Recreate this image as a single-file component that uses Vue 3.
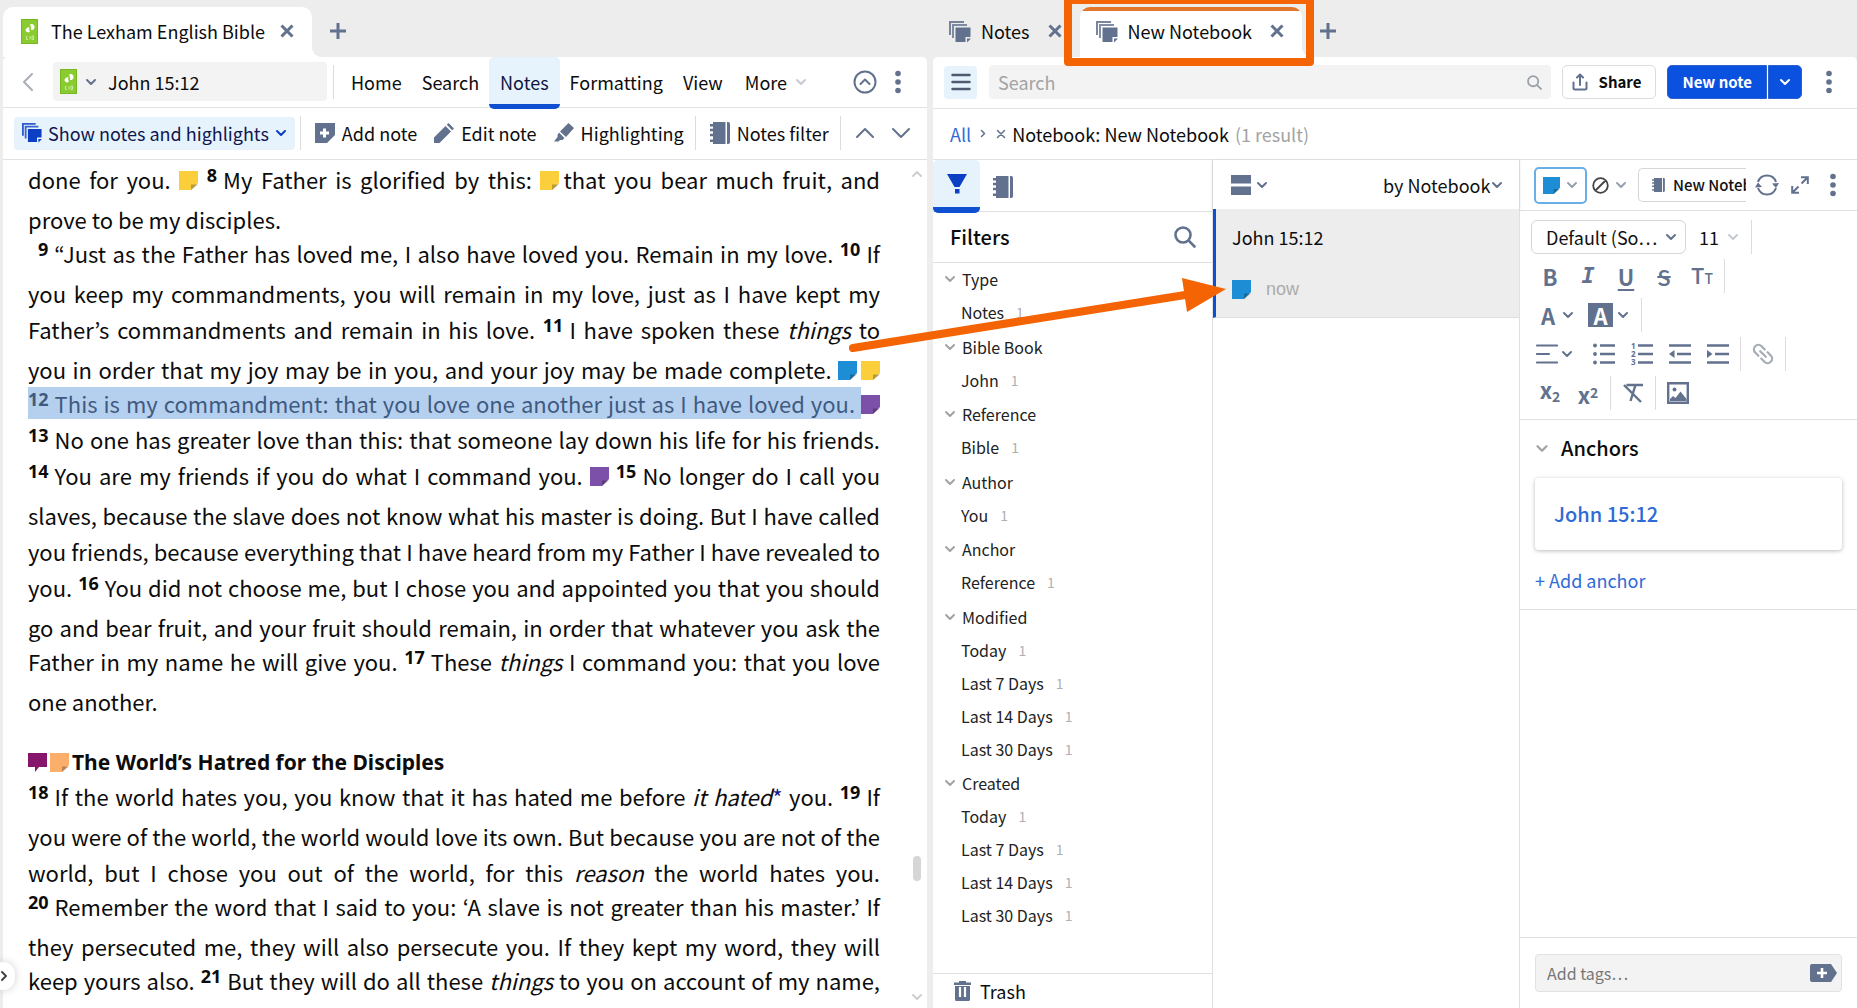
<script setup>
import { h, ref } from 'vue'

const stroke = (w, d) => `<path d="${d}" fill="none" stroke="currentColor" stroke-width="${w}" stroke-linecap="round" stroke-linejoin="round"/>`
const glyphs = {
  down: ['0 0 12 8', stroke(2, 'M2 2l4 4 4-4')],
  up: ['0 0 20 12', stroke(2, 'M2 10l8-8 8 8')],
  downWide: ['0 0 20 12', stroke(2, 'M2 2l8 8 8-8')],
  upSmall: ['0 0 12 8', stroke(2, 'M2 6l4-4 4 4')],
  back: ['0 0 12 20', stroke(2, 'M10 2l-8 8 8 8')],
  right: ['0 0 8 12', stroke(2, 'M2 2l4 4-4 4')],
  close: ['0 0 14 14', '<path d="M1.500 1.500l11 11M12.500 1.500l-11 11" fill="none" stroke="currentColor" stroke-width="3"/>'],
  closeThin: ['0 0 10 10', stroke(1.5, 'M1.500 1.500l7 7M8.500 1.500l-7 7')],
  plus: ['0 0 18 18', '<path d="M9 1v16M1 9h16" fill="none" stroke="currentColor" stroke-width="3"/>'],
  dots: ['0 0 6 24', '<g fill="currentColor"><circle cx="3" cy="3.500" r="2.800"/><circle cx="3" cy="12" r="2.800"/><circle cx="3" cy="20.500" r="2.800"/></g>'],
  book: ['0 0 17 25', '<path d="M0 0h17v25H0z" fill="#8acb2f"/><path d="M.5.500h16v24H.5z" fill="none" stroke="#75b81f"/><path d="M9 5.500a3 3 0 1 1 1 5.500c.5-2-.2-3.500-1-5.500zM8.500 8c-2.500.5-4.500 2-3.800 3.800 1 1.800 3.500 2.200 4.300.5-1-1-.9-2.500-.5-4.300z" fill="#fff"/><path d="M5.500 17v3.500h1.500M9 17v3.500M11 17v3.500h1.500v-3.500z" fill="none" stroke="#c8ea9b"/>'],
  stack: ['0 0 22 22', '<g fill="currentColor"><path d="M0 0h15v2H2v12H0z" opacity=".85"/><path d="M3 3h15v2H5v12H3z" opacity=".8"/><path d="M6.500 6.500h15V16h-5v5h-10z"/><path d="M18 21.500v-4h4z"/></g>'],
  circleUp: ['0 0 24 24', stroke(2, 'M12 1.500a10.500 10.500 0 1 1 0 21 10.500 10.500 0 0 1 0-21zM7.500 14l4.500-4.500 4.500 4.500')],
  addNote: ['0 0 20 20', '<path d="M0 0h20v12l-8 8H0z" fill="currentColor"/><path d="M9.500 5.500v9M5 10h9" stroke="#fff" stroke-width="3"/>'],
  pencil: ['0 0 20 20', '<path d="M0 20v-5.500L11.500 3 17 8.500 5.500 20zM12.800 1.800L14.500 0 20 5.500l-1.800 1.700z" fill="currentColor"/>'],
  marker: ['0 0 20 20', '<path d="M6 8.500L14.500 0 20 5l-8 9zM5 9.500l5.500 5.500-2 2H6l-1.500 1.500H0l3.500-4.500V12z" fill="currentColor"/>'],
  notebook: ['0 0 20 22', '<g fill="currentColor"><path d="M3 0h12.500v22H3v-2H0v-2.500h3v-3.200H0v-2.500h3V9.200H0V6.700h3V4.500H0V2h3z"/><path d="M17 0h1.200A1.800 1.800 0 0 1 20 1.800v18.400a1.800 1.800 0 0 1-1.800 1.800H17z"/></g>'],
  menu: ['0 0 20 18', stroke(2.5, 'M1.500 2h17M1.500 9h17M1.500 16h17')],
  search: ['0 0 22 22', stroke(2.6, 'M9 1.500a7.500 7.500 0 1 1 0 15 7.500 7.500 0 0 1 0-15zM14.700 14.700l5.800 5.800')],
  share: ['0 0 16 18', stroke(2, 'M8 12V2M5 4.500L8 1.500l3 3M1.500 9.500V15a1.500 1.500 0 0 0 1.500 1.500h10a1.500 1.500 0 0 0 1.500-1.500V9.500')],
  funnel: ['0 0 20 20', '<path d="M0 0h20l-7.500 13h-5zM8 15h4.500v4.500H8z" fill="currentColor"/>'],
  rows: ['0 0 20 20', '<path d="M0 0h20v8.500H0zM0 11.500h20V20H0z" fill="currentColor"/>'],
  note: ['0 0 19 19', '<path d="M0 0h19v12l-7 7H0z" fill="currentColor"/><path d="M12 19v-5.500h7z" fill="#000" opacity=".25"/>'],
  bubble: ['0 0 19 19', '<path d="M0 0h19v14h-8l-4 5v-5H0z" fill="currentColor"/>'],
  none: ['0 0 17 17', '<path d="M8.500 1.200a7.300 7.300 0 1 1 0 14.600 7.300 7.300 0 0 1 0-14.600zM3.500 13.500l10-10" fill="none" stroke="#444" stroke-width="1.800"/>'],
  sync: ['0 0 24 22', '<path d="M3 8a9.500 9.500 0 0 1 18 0M3 14a9.500 9.500 0 0 0 18 0" fill="none" stroke="currentColor" stroke-width="2"/><path d="M0 13.500l3-5 4 4.500zM24 9l-3 5-4-4.500z" fill="currentColor"/>'],
  expand: ['0 0 18 18', '<path d="M10.500 7.500L16 2M10 1.200h6.800V8M7.500 10.500L2 16M1.200 10v6.800H8" fill="none" stroke="currentColor" stroke-width="2"/>'],
  align: ['0 0 22 22', stroke(2.2, 'M1 2.500h20M1 11h12M1 19.500h20')],
  bullets: ['0 0 22 22', '<path d="M7 2.500h15M7 11h15M7 19.500h15" stroke="currentColor" stroke-width="2.400"/><g fill="currentColor"><circle cx="2" cy="2.500" r="1.900"/><circle cx="2" cy="11" r="1.900"/><circle cx="2" cy="19.500" r="1.900"/></g>'],
  numbers: ['0 0 22 22', '<path d="M7 2.500h15M7 11h15M7 19.500h15" stroke="currentColor" stroke-width="2.400"/><g fill="currentColor" font-family="Noto Sans, sans-serif" font-weight="700" font-size="8"><text x="0" y="6">1</text><text x="0" y="14">2</text><text x="0" y="22">3</text></g>'],
  outdent: ['0 0 22 22', '<path d="M0 2.500h22M8 11h14M0 19.500h22" stroke="currentColor" stroke-width="2.400"/><path d="M0 11l5.500-4v8z" fill="currentColor"/>'],
  indent: ['0 0 22 22', '<path d="M0 2.500h22M8 11h14M0 19.500h22" stroke="currentColor" stroke-width="2.400"/><path d="M5.500 11L0 7v8z" fill="currentColor"/>'],
  link: ['0 0 24 24', '<g transform="rotate(45 12 12)">' + stroke(2.2, 'M10 7.500H5.500a4.500 4.500 0 0 0 0 9H10M14 7.500h4.500a4.500 4.500 0 0 1 0 9H14M8 12h8') + '</g>'],
  clear: ['0 0 20 20', '<path d="M3.500 2H20M12.500 2l-5 16M1 2l17 17" fill="none" stroke="currentColor" stroke-width="2.400"/>'],
  image: ['0 0 22 22', '<path d="M1.200 1.200h19.600v19.600H1.200z" fill="none" stroke="currentColor" stroke-width="2.400"/><circle cx="7.500" cy="7.500" r="2" fill="currentColor"/><path d="M3 19v-2l3-3 2.500 2 5-6.500L19.500 17v2z" fill="currentColor"/>'],
  trash: ['0 0 17 20', '<path d="M0 1.500h5V0h7v1.500h5V4H0zM1 5h15v13.500a1.500 1.500 0 0 1-1.500 1.500h-12A1.500 1.500 0 0 1 1 18.500z" fill="currentColor"/><path d="M6 6v10M11 6v10" stroke="#fff" stroke-width="2.200"/>'],
  tag: ['0 0 27 18', '<path d="M2 0h19l6 9-6 9H2a2 2 0 0 1-2-2V2a2 2 0 0 1 2-2z" fill="currentColor"/><path d="M12 4v10M7 9h10" stroke="#fff" stroke-width="2.600"/>'],
}
const Ico = (p) => {
  const [box, inner] = glyphs[p.n]
  const [, , w, hh] = box.split(' ').map(Number)
  const width = p.w || w
  return h('svg', { class: 'ico', viewBox: box, width, height: Math.round((hh * width) / w), 'aria-hidden': 'true', innerHTML: inner })
}
Ico.props = ['n', 'w']

const menu = ['Home', 'Search', 'Notes', 'Formatting', 'View']
const days = ['Today', 'Last 7 Days', 'Last 14 Days', 'Last 30 Days']
const groups = [
  { name: 'Type', items: ['Notes'] },
  { name: 'Bible Book', items: ['John'] },
  { name: 'Reference', items: ['Bible'] },
  { name: 'Author', items: ['You'] },
  { name: 'Anchor', items: ['Reference'] },
  { name: 'Modified', items: days },
  { name: 'Created', items: days },
]
const reference = ref('John 15:12')
const query = ref('')
const tags = ref('')
</script>

<template>
  <div class="app">
    <section class="pane">
      <header class="tabs">
        <div class="tab active">
          <Ico n="book" /><span>The Lexham English Bible</span>
          <button class="x" aria-label="Close tab"><Ico n="close" /></button>
        </div>
        <button class="add" aria-label="New tab"><Ico n="plus" /></button>
      </header>
      <div class="body">
        <nav class="bar main">
          <button class="back" aria-label="Back"><Ico n="back" /></button>
          <div class="address">
            <Ico n="book" /><Ico n="down" class="slate" />
            <input v-model="reference" aria-label="Reference" />
          </div>
          <i class="sep"></i>
          <button v-for="m in menu" :key="m" class="mi" :class="{ on: m === 'Notes' }">{{ m }}</button>
          <button class="mi more">More<Ico n="down" class="faint" /></button>
          <span class="grow"></span>
          <button class="slate" aria-label="Collapse toolbar"><Ico n="circleUp" /></button>
          <button class="slate kebab" aria-label="Panel menu"><Ico n="dots" /></button>
        </nav>
        <div class="bar tools">
          <button class="pill"><Ico n="stack" w="20" />Show notes and highlights<Ico n="down" /></button>
          <i class="sep"></i>
          <button class="tool"><Ico n="addNote" />Add note</button>
          <button class="tool"><Ico n="pencil" />Edit note</button>
          <button class="tool"><Ico n="marker" />Highlighting</button>
          <i class="sep"></i>
          <button class="tool"><Ico n="notebook" />Notes filter</button>
          <i class="sep"></i>
          <button class="slate step" aria-label="Previous"><Ico n="up" /></button>
          <button class="slate step" aria-label="Next"><Ico n="downWide" /></button>
        </div>
        <div class="reader">
          <article class="text">
            <p>done for you. <Ico n="note" class="yl" /> <sup>8</sup>My Father is glorified by this: <Ico n="note" class="yl gap" />that you bear much fruit, and</p>
            <p class="c end">prove to be my disciples.</p>
            <p class="in"><sup>9</sup>“Just as the Father has loved me, I also have loved you. Remain in my love. <sup>10</sup>If</p>
            <p class="c">you keep my commandments, you will remain in my love, just as I have kept my</p>
            <p class="b">Father’s commandments and remain in his love. <sup>11</sup>I have spoken these <em>things</em> to</p>
            <p class="c">you in order that my joy may be in you, and your joy may be made complete. <Ico n="note" class="bl gap" /><Ico n="note" class="yl" /></p>
            <p><mark><sup>12</sup>This is my commandment: that you love one another just as I have loved you.</mark><Ico n="note" class="pu" /></p>
            <p class="b"><sup>13</sup>No one has greater love than this: that someone lay down his life for his friends.</p>
            <p class="b"><sup>14</sup>You are my friends if you do what I command you. <Ico n="note" class="pu" /> <sup>15</sup>No longer do I call you</p>
            <p class="c">slaves, because the slave does not know what his master is doing. But I have called</p>
            <p class="b">you friends, because everything that I have heard from my Father I have revealed to</p>
            <p class="b">you. <sup>16</sup>You did not choose me, but I chose you and appointed you that you should</p>
            <p class="c">go and bear fruit, and your fruit should remain, in order that whatever you ask the</p>
            <p>Father in my name he will give you. <sup>17</sup>These <em>things</em> I command you: that you love</p>
            <p class="c end">one another.</p>
            <h2><Ico n="bubble" class="pl" /><Ico n="note" class="or" />The World’s Hatred for the Disciples</h2>
            <p><sup>18</sup>If the world hates you, you know that it has hated me before <em>it hated</em><a href="#note" class="fn">*</a> you. <sup>19</sup>If</p>
            <p class="c">you were of the world, the world would love its own. But because you are not of the</p>
            <p class="b">world, but I chose you out of the world, for this <em>reason</em> the world hates you.</p>
            <p><sup>20</sup>Remember the word that I said to you: ‘A slave is not greater than his master.’ If</p>
            <p class="c">they persecuted me, they will also persecute you. If they kept my word, they will</p>
            <p>keep yours also. <sup>21</sup>But they will do all these <em>things</em> to you on account of my name,</p>
            <p class="c">because they do not know the one who sent me. <sup>22</sup>If I had not come and spoken</p>
          </article>
          <div class="scroll" aria-hidden="true">
            <Ico n="upSmall" /><span class="above"></span><span class="thumb"></span><span class="below"></span><Ico n="down" />
          </div>
        </div>
      </div>
    </section>

    <section class="pane">
      <header class="tabs">
        <div class="tab idle">
          <Ico n="stack" /><span>Notes</span>
          <button class="x" aria-label="Close tab"><Ico n="close" /></button>
        </div>
        <div class="tab active focus">
          <Ico n="stack" /><span>New Notebook</span>
          <button class="x" aria-label="Close tab"><Ico n="close" /></button>
          <div class="callout" aria-hidden="true"></div>
        </div>
        <button class="add" aria-label="New tab"><Ico n="plus" /></button>
      </header>
      <div class="body">
        <div class="bar find">
          <button class="burger" aria-label="Toggle sidebar"><Ico n="menu" /></button>
          <label class="search"><input v-model="query" placeholder="Search" aria-label="Search" /><Ico n="search" w="15" /></label>
          <button class="share"><Ico n="share" />Share</button>
          <div class="split">
            <button>New note</button><button aria-label="More note options"><Ico n="down" /></button>
          </div>
          <button class="slate kebab" aria-label="Panel menu"><Ico n="dots" /></button>
        </div>
        <div class="bar crumbs">
          <a href="#all">All</a><Ico n="right" w="6" class="slate" />
          <button class="slate rm" aria-label="Remove filter"><Ico n="closeThin" /></button>
          <span>Notebook: New Notebook</span><span class="count">(1 result)</span>
        </div>
        <div class="cols">
          <aside class="filters">
            <div class="ftabs">
              <button class="on" aria-label="Filters"><Ico n="funnel" /></button>
              <button aria-label="Notebooks"><Ico n="notebook" /></button>
            </div>
            <div class="fhead"><h3>Filters</h3><button class="slate" aria-label="Search filters"><Ico n="search" /></button></div>
            <div class="tree">
              <section v-for="g in groups" :key="g.name">
                <button class="gh"><Ico n="down" />{{ g.name }}</button>
                <a v-for="i in g.items" :key="i" href="#filter" class="fi">{{ i }}<small>1</small></a>
              </section>
            </div>
            <button class="trash"><Ico n="trash" />Trash</button>
          </aside>

          <div class="list">
            <div class="lhead">
              <button class="slate view" aria-label="View"><Ico n="rows" /><Ico n="down" /></button>
              <label class="pick sort"><select aria-label="Sort order"><option>by Notebook</option></select><Ico n="down" /></label>
            </div>
            <article class="card">
              <h4>John 15:12</h4>
              <div><Ico n="note" class="bl" /><time>now</time></div>
            </article>
          </div>

          <div class="editor">
            <div class="ehead">
              <button class="style" aria-label="Note style"><Ico n="note" w="17" class="bl" /><Ico n="down" /></button>
              <button class="hl" aria-label="Highlight style"><Ico n="none" /><Ico n="down" /></button>
              <button class="chip"><Ico n="notebook" w="13" /><span>New Notebook</span></button>
              <button class="slate" aria-label="Sync"><Ico n="sync" /></button>
              <button class="slate" aria-label="Expand"><Ico n="expand" /></button>
              <button class="slate" aria-label="Note menu"><Ico n="dots" /></button>
            </div>
            <div class="format">
              <div class="row">
                <label class="pick font"><select aria-label="Font"><option>Default (So…</option></select><Ico n="down" /></label>
                <label class="pick size"><select aria-label="Font size"><option>11</option></select><Ico n="down" class="faint" /></label>
                <i class="sep"></i>
              </div>
              <div class="row">
                <button class="sq" aria-label="Bold"><b>B</b></button>
                <button class="sq" aria-label="Italic"><b class="it">I</b></button>
                <button class="sq" aria-label="Underline"><b class="un">U</b></button>
                <button class="sq" aria-label="Strikethrough"><b class="st">S</b></button>
                <button class="sq" aria-label="Small caps"><b class="tt">T<small>T</small></b></button>
                <i class="sep"></i>
              </div>
              <div class="row">
                <button class="dd" aria-label="Text color"><b>A</b><Ico n="down" /></button>
                <button class="dd" aria-label="Background color"><b class="inv">A</b><Ico n="down" /></button>
                <i class="sep"></i>
              </div>
              <div class="row">
                <button class="dd al" aria-label="Align"><Ico n="align" /><Ico n="down" /></button>
                <button class="sq" aria-label="Bulleted list"><Ico n="bullets" /></button>
                <button class="sq" aria-label="Numbered list"><Ico n="numbers" /></button>
                <button class="sq" aria-label="Outdent"><Ico n="outdent" /></button>
                <button class="sq" aria-label="Indent"><Ico n="indent" /></button>
                <i class="sep"></i>
                <button class="sq dim" aria-label="Link"><Ico n="link" /></button>
                <i class="sep"></i>
              </div>
              <div class="row">
                <button class="sq" aria-label="Subscript"><b>x<small class="lo">2</small></b></button>
                <button class="sq" aria-label="Superscript"><b>x<small class="hi">2</small></b></button>
                <i class="sep"></i>
                <button class="sq" aria-label="Clear formatting"><Ico n="clear" /></button>
                <i class="sep"></i>
                <button class="sq" aria-label="Insert image"><Ico n="image" /></button>
              </div>
            </div>
            <section class="anchors">
              <h3><Ico n="down" w="14" />Anchors</h3>
              <a href="#john" class="anchor">John 15:12</a>
              <button class="addanchor">+ Add anchor</button>
            </section>
            <div class="grow"></div>
            <label class="tags"><input v-model="tags" placeholder="Add tags…" aria-label="Add tags" /><Ico n="tag" /></label>
          </div>
        </div>
      </div>
    </section>

    <button class="drawer" aria-label="Open sidebar"><Ico n="right" /></button>
    <svg class="arrow" viewBox="0 0 380 76" width="380" height="76" aria-hidden="true">
      <path d="M5 70L337 17" fill="none" stroke="#f46404" stroke-width="8" stroke-linecap="round" />
      <path d="M334 0L378 11L339 34z" fill="#f46404" />
    </svg>
  </div>
</template>

<style>
body { background: #ededed; overflow: hidden; }
</style>

<style scoped>
.app, .app * { box-sizing: border-box; }
.app {
  position: relative;
  display: grid;
  grid-template-columns: minmax(0, 1fr) minmax(0, 1fr);
  gap: 6px;
  height: 100vh;
  padding-left: 3px;
  overflow: hidden;
  background: #ededed;
  color: #0c0c0c;
  font-family: "Noto Sans CJK KR", "Noto Sans", sans-serif;
  font-size: 18px;
  line-height: 24px;
}
button, input, select { margin: 0; padding: 0; border: 0; background: none; font: inherit; color: inherit; outline: none; }
button { display: inline-flex; align-items: center; white-space: nowrap; }
input { min-width: 0; }
input::placeholder { color: #a3a3a3; opacity: 1; }
select { appearance: none; }
a { color: #2f6bd6; text-decoration: none; }
h2, h3, h4, p { margin: 0; }
.ico { flex: none; display: block; }
.slate { color: #62718d; }
.faint { color: #c6cbd2; }
.grow { flex: 1; }
.yl { color: #fbcf3b; }
.bl { color: #1d8ed6; }
.pu { color: #7c4fa8; }
.pl { color: #86166c; }
.or { color: #fcae6b; }
.sep { flex: none; width: 1px; height: 34px; background: #dcdcdc; }

.pane { display: flex; flex-direction: column; min-width: 0; min-height: 0; }
.tabs { display: flex; flex: none; height: 57px; padding-top: 7px; }
.tab { position: relative; display: flex; align-items: flex-start; gap: 13px; height: 50px; padding: 0 18px; white-space: nowrap; }
.tab > .ico { margin-top: 12px; color: #62718d; }
.tab > span { margin-top: 12px; }
.tab .x { margin: 17px 0 0 2px; color: #62718d; }
.tab.active { border-radius: 10px 10px 0 0; background: #fff; }
.tab.active::after { content: ""; position: absolute; left: 100%; bottom: 0; width: 10px; height: 10px; background: radial-gradient(circle at 100% 0, #ededed 10px, #fff 10px); }
.tab.idle, .tab.focus { gap: 10px; padding: 0 18px 0 16px; }
.tab.idle > .ico, .tab.focus > .ico { margin-top: 14px; }
.tab.focus { background: linear-gradient(#e2762c 4px, #fff 4px); }
.tab.idle .x, .tab.focus .x { margin-left: 8px; }
.add { align-self: flex-start; margin: 15px 0 0 17px; color: #62718d; }
.callout { position: absolute; z-index: 2; left: -16px; right: -12px; top: -11px; bottom: -9px; border: 8px solid #f46404; border-radius: 4px; }

.body { display: flex; flex: 1; flex-direction: column; min-height: 0; border-radius: 5px 5px 0 0; background: #fff; }
.bar { display: flex; flex: none; align-items: center; padding-bottom: 1px; border-bottom: 1px solid #e2e2e2; }
.main { height: 51px; padding-left: 19px; padding-right: 22px; }
.back { width: 31px; color: #a9aeb8; }
.address { display: flex; align-items: center; gap: 8px; flex: 0 1 274px; min-width: 0; height: 39px; padding: 0 7px; border-radius: 4px; background: #f3f3f3; }
.address input { flex: 1; margin-left: 3px; }
.main .sep { margin: 0 7px 0 6px; }
.mi { height: 50px; padding: 0 10px; }
.mi.on { align-self: stretch; height: 52px; padding: 2px 11px 0; border-bottom: 5px solid #0f50d0; border-radius: 5px; background: #e6f3fd; color: #0e1740; }
.more { gap: 8px; margin-left: 2px; }
.main .kebab { margin-left: 18px; margin-right: 4px; }
.tools { height: 52px; gap: 14px; padding-left: 11px; padding-right: 16px; }
.pill { gap: 6px; height: 33px; padding: 0 8px; margin-right: -9px; border-radius: 4px; background: #e6f3fd; color: #10164f; }
.pill .ico { color: #0b3fc4; }
.tool { gap: 7px; }
.tool .ico { color: #62718d; }
.tool + .tool { margin-left: 3px; }
.tool + .sep { margin-left: -3px; }
.step { margin-right: 2px; }

.reader { display: flex; flex: 1; min-height: 0; overflow: hidden; }
.text { flex: 1; min-width: 0; padding: 2px 26px 0 25px; font-size: 22px; }
.text p { height: 34px; line-height: 34px; white-space: nowrap; text-align: justify; text-align-last: justify; }
.text .b { height: 36px; padding-top: 2px; }
.text .c { height: 40px; padding-top: 6px; }
.text .end { text-align-last: left; }
.text .in { padding-left: 10px; }
.text sup { margin-right: 6px; font: 700 18px/1px "Noto Sans", sans-serif; vertical-align: 7px; }
.text .ico { display: inline-block; vertical-align: -1px; }
.text .gap { margin-right: 4px; }
.text em { font-style: italic; }
.text mark { padding-right: 6px; background: #b5d0ef; color: #3f5a80; }
.text .fn { color: #1a1a8c; }
.text h2 { display: flex; align-items: center; gap: 3px; height: 34px; margin-top: 27px; font: 700 21px/30px "Noto Sans", sans-serif; }
.scroll { display: flex; flex: none; flex-direction: column; align-items: center; width: 21px; padding: 10px 0 7px; color: #cfcfcf; }
.above { flex: 675; }
.thumb { width: 8px; height: 25px; border-radius: 4px; background: #d6d6d6; }
.below { flex: 112; }

.find { height: 52px; padding-left: 11px; padding-right: 25px; }
.burger { justify-content: center; width: 33px; height: 33px; margin-right: 12px; border-radius: 4px; background: #e6f3fd; color: #4d5b70; }
.search { display: flex; flex: 1; align-items: center; height: 34px; padding: 0 9px; border-radius: 4px; background: #f3f3f3; color: #9aa1ab; }
.search input { flex: 1; color: #222; }
.share { gap: 11px; height: 34px; margin: 0 11px; padding: 0 14px 0 9px; border: 1px solid #dcdcdc; border-radius: 5px; font-size: 15px; font-weight: 700; }
.share .ico { color: #62718d; }
.split { display: flex; gap: 1px; color: #fff; font-size: 15px; font-weight: 700; }
.split button { height: 34px; padding: 0 14px; border: 1px solid #2c62cf; background: #0b51e0; }
.split button:first-child { border-radius: 5px 0 0 5px; }
.split button:last-child { padding: 0 10px; border-radius: 0 5px 5px 0; }
.find .kebab { margin-left: 24px; }
.crumbs { height: 51px; padding-left: 17px; }
.crumbs .ico { margin-left: 9px; }
.crumbs .rm { margin: 0 6px 0 1px; }
.count { margin-left: 6px; color: #a3a3a3; }

.cols { display: grid; flex: 1; grid-template-columns: 280px minmax(0, 1fr) 337px; min-height: 0; }
.filters, .list { display: flex; flex-direction: column; min-height: 0; border-right: 1px solid #e0e0e0; }
.filters { font-size: 16px; }
.ftabs { display: flex; flex: none; height: 52px; border-bottom: 1px solid #e0e0e0; color: #62718d; }
.ftabs button { justify-content: center; width: 47px; height: 53px; margin-right: 13px; }
.ftabs .on { border-radius: 5px; border-bottom: 6px solid #0f50d0; background: #e6f3fd; color: #0b3fc4; }
.ftabs button + button { width: 20px; }
.fhead { display: flex; flex: none; align-items: center; justify-content: space-between; height: 51px; padding: 0 16px 0 17px; border-bottom: 1px solid #e0e0e0; }
.fhead h3, .anchors h3 { font-size: 20px; font-weight: 500; }
.tree { flex: 1; min-height: 0; margin-top: -2px; overflow: hidden; color: #222; }
.tree section { padding-top: 1px; }
.tree section:nth-child(even) { padding-top: 2px; }
.gh { gap: 6px; display: flex; height: 33px; padding-left: 11px; }
.gh .ico { color: #a3a3a3; }
.fi { display: flex; align-items: center; height: 33px; padding-left: 28px; color: #222; }
.fi small { margin-left: 12px; font-size: 14px; color: #b0b0b0; }
.trash { flex: none; gap: 9px; height: 35px; padding-left: 21px; border-top: 1px solid #e0e0e0; font-size: 18px; }
.trash .ico { color: #62718d; }

.lhead { display: flex; flex: none; align-items: center; justify-content: space-between; height: 49px; padding: 0 16px 0 18px; box-shadow: 0 1px 3px #ccc; }
.view { gap: 5px; }
.pick { display: inline-flex; align-items: center; color: #62718d; }
.pick select { color: #111; }
.card { display: flex; flex-direction: column; gap: 28px; height: 109px; padding: 16px; border-left: 3px solid #0f50d0; border-bottom: 1px solid #dfdfdf; background: #ededed; }
.card h4 { font-size: 18px; font-weight: 400; }
.card div { display: flex; align-items: center; gap: 15px; }
.card time { color: #ababab; font: 400 18px/24px "Liberation Sans", sans-serif; }

.editor { display: flex; flex-direction: column; min-width: 0; min-height: 0; }
.ehead { display: flex; flex: none; align-items: center; height: 51px; padding: 0 21px 0 14px; border-bottom: 1px solid #e0e0e0; color: #62718d; }
.style { gap: 6px; height: 37px; padding: 0 7px; border: 2px solid #6aaee6; border-radius: 5px; }
.style .ico + .ico, .hl .ico + .ico { color: #97a0af; }
.hl { gap: 6px; margin: 0 11px 0 5px; }
.chip { flex: 1; gap: 8px; min-width: 0; height: 34px; padding-left: 13px; margin-right: 9px; overflow: hidden; border: 1px solid #d6d6d6; border-right: 0; border-radius: 5px 0 0 5px; color: #111; font-size: 15px; font-weight: 500; }
.chip .ico { color: #62718d; }
.ehead button:nth-child(5) { margin: 0 21px 0 12px; }
.format { flex: none; padding: 6px 11px 7px; border-bottom: 1px solid #e0e0e0; color: #62718d; }
.row { display: flex; align-items: center; height: 39px; }
.font { justify-content: space-between; width: 155px; height: 34px; padding: 0 8px 0 14px; border: 1px solid #d6d6d6; border-radius: 6px; }
.size { gap: 8px; margin: 0 12px 0 13px; }
.sq { justify-content: center; width: 38px; }
.row b { font-size: 22px; font-weight: 700; }
.row .it { font-family: "DejaVu Sans Mono", monospace; font-style: italic; }
.row .un { text-decoration: underline; text-underline-offset: 3px; }
.row .st { text-decoration: line-through; font-weight: 500; }
.row .tt { font-weight: 500; }
.row small { font-size: 14px; }
.row .lo { vertical-align: -3px; }
.row .hi { vertical-align: 6px; }
.row .dd { gap: 7px; padding-left: 10px; }
.row .al { gap: 3px; padding: 0 12px 0 5px; }
.row .dd .inv { width: 25px; margin: 0 -3px 0 4px; background: #62718d; color: #fff; }
.row .dd + .sep { margin-left: 12px; }
.row .sq + .sep { margin: 0 3px; }
.dim { color: #a6acb6; }
.anchors { flex: none; padding: 15px 15px 16px; border-bottom: 1px solid #e0e0e0; }
.anchors h3 { display: flex; align-items: center; gap: 12px; height: 26px; }
.anchors .ico { color: #a3a3a3; }
.anchor { display: flex; align-items: center; height: 72px; margin: 17px 0 16px; padding-left: 19px; border-radius: 4px; box-shadow: 0 1px 4px #bbb; font-size: 20px; font-weight: 500; }
.addanchor { height: 27px; color: #2f6bd6; }
.tags { display: flex; flex: none; align-items: center; border-top: 1px solid #e0e0e0; padding: 16px 15px; color: #62718d; }
.tags input { flex: 1; height: 38px; padding-left: 11px; margin-right: -32px; border: 1px solid #e2e2e2; border-radius: 4px; background: #f3f3f3; font-size: 16px; }
.tags input::placeholder { color: #777; }
.tags .ico { margin-right: 5px; }

.drawer { position: absolute; left: -9px; bottom: 18px; justify-content: center; width: 24px; height: 28px; padding-left: 2px; border-radius: 12px; background: #fff; box-shadow: 0 0 8px #d0d0d0; color: #444; }
.arrow { position: absolute; z-index: 3; left: 848px; top: 278px; }
</style>
